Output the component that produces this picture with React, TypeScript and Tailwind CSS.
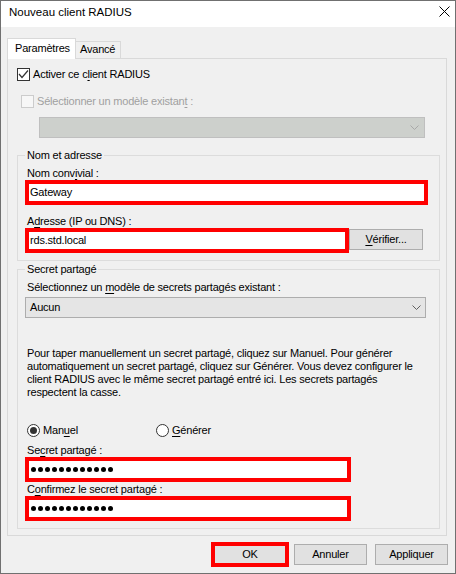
import React from 'react';

const U = ({ children }: { children: React.ReactNode }) => (
  <span className="underline underline-offset-[2px]">{children}</span>
);

const Chevron = ({ color }: { color: string }) => (
  <svg width="9" height="5" viewBox="0 0 9 5" fill="none">
    <path d="M0.5 0.5 L4.5 4.5 L8.5 0.5" stroke={color} strokeWidth="1" />
  </svg>
);

const RedBox = ({ className, children }: { className: string; children: React.ReactNode }) => (
  <div className={`h-[25px] border-[4px] border-[#ff0000] bg-white flex items-center pl-[1px] shrink-0 ${className}`}>
    {children}
  </div>
);

const Dots = () => (
  <div className="flex gap-[2px] pl-[1px]">
    {Array.from({ length: 12 }).map((_, i) => (
      <span key={i} className="w-[5px] h-[5px] rounded-full bg-black" />
    ))}
  </div>
);

const Button = ({ className, children }: { className?: string; children: React.ReactNode }) => (
  <button className={`w-[73px] h-[21px] bg-[#e1e1e1] border border-[#adadad] flex items-center justify-center ${className ?? ''}`}>
    {children}
  </button>
);

const Radio = ({ checked }: { checked?: boolean }) => (
  <span className="w-[13px] h-[13px] rounded-full border border-[#333333] bg-white flex items-center justify-center shrink-0">
    {checked && <span className="w-[7px] h-[7px] rounded-full bg-[#333333]" />}
  </span>
);

export default function App() {
  return (
    <div className="w-[456px] h-[574px] border border-[#707070] bg-[#f0f0f0] flex flex-col text-black font-['Liberation_Sans',Arial,sans-serif] text-[11px] tracking-[-0.2px] leading-[15px]">
      {/* Title bar */}
      <div className="h-[26px] bg-white flex items-start justify-between pl-[8px] pr-[5px] shrink-0">
        <span className="mt-[4px] text-[11.5px] tracking-normal">Nouveau client RADIUS</span>
        <svg className="mt-[5px]" width="11" height="11" viewBox="0 0 11 11">
          <path d="M0.5 0.5 L10.5 10.5 M10.5 0.5 L0.5 10.5" stroke="#000" strokeWidth="1" />
        </svg>
      </div>

      <div className="flex-1 flex flex-col pl-[6px] pr-[8px] pt-[11px]">
        {/* Tabs */}
        <div className="flex items-end h-[21px] relative z-10 -mb-px">
          <div className="w-[69px] h-[21px] border border-b-0 border-[#d9d9d9] bg-white pl-[7px] pt-[2px]">
            Paramètres
          </div>
          <div className="w-[45px] h-[18px] border border-l-0 border-[#d9d9d9] bg-[#f0f0f0] pl-[4px]">
            Avancé
          </div>
        </div>

        {/* Tab page */}
        <div className="h-[478px] border border-[#d9d9d9] bg-[#f0f0f0] flex flex-col">
          <div className="mt-[8px] ml-[9px] flex items-center h-[15px]">
            <span className="w-[13px] h-[13px] border border-[#333333] bg-white shrink-0">
              <svg width="11" height="11" viewBox="0 0 11 11" fill="none">
                <path d="M1 5 L4 8.5 L10 1.5" stroke="#333333" strokeWidth="1.2" />
              </svg>
            </span>
            <span className="ml-[3px]">Activer ce c<U>l</U>ient RADIUS</span>
          </div>

          <div className="mt-[12px] ml-[13px] flex items-center h-[15px] text-[#a0a0a0]">
            <span className="w-[13px] h-[13px] border border-[#cccccc] bg-[#f7f7f7] shrink-0" />
            <span className="ml-[3px]">Sélectionner un modèle existan<U>t</U> :</span>
          </div>

          <div className="mt-[8px] ml-[31px] w-[386px] h-[21px] bg-[#cdd0cc] border border-[#bfbfbf] flex items-center justify-end pr-[5px] shrink-0">
            <Chevron color="#a8a8a8" />
          </div>

          {/* Nom et adresse */}
          <fieldset className="mt-[10px] ml-[9px] w-[423px] border border-[#dcdcdc] px-[7px] pb-[7px]">
            <legend className="px-[2px] leading-[15px]">Nom et adresse</legend>
            <div className="mt-[3px] h-[14px] leading-[14px] pl-[2px]">Nom conv<U>i</U>vial :</div>
            <RedBox className="w-[403px]">Gateway</RedBox>
            <div className="mt-[9px] h-[14px] leading-[14px] pl-[2px]">A<U>d</U>resse (IP ou DNS) :</div>
            <div className="flex items-start">
              <RedBox className="w-[324px]">rds.std.local</RedBox>
              <Button className="mt-[1px] w-[74px]">
                <span><U>V</U>érifier...</span>
              </Button>
            </div>
          </fieldset>

          {/* Secret partagé */}
          <fieldset className="mt-[1px] ml-[9px] w-[423px] border border-[#dcdcdc] px-[7px] pb-[7px]">
            <legend className="px-[2px] leading-[15px]">Secret partagé</legend>
            <div className="mt-[3px] h-[14px] leading-[14px] pl-[2px]">
              Sélectionnez un <U>m</U>odèle de secrets partagés existant :
            </div>
            <div className="mt-[3px] w-[401px] h-[21px] bg-[#e5e5e5] border border-[#adadad] flex items-center justify-between pl-[4px] pr-[4px]">
              <span>Aucun</span>
              <Chevron color="#606060" />
            </div>
            <p className="mt-[29px] pl-[2px] leading-[13px] whitespace-nowrap">
              Pour taper manuellement un secret partagé, cliquez sur Manuel. Pour générer
              <br />
              automatiquement un secret partagé, cliquez sur Générer. Vous devez configurer le
              <br />
              client RADIUS avec le même secret partagé entré ici. Les secrets partagés
              <br />
              respectent la casse.
            </p>
            <div className="mt-[24px] flex items-center h-[15px] pl-[2px]">
              <div className="w-[129px] flex items-center">
                <Radio checked />
                <span className="ml-[3px]">Man<U>u</U>el</span>
              </div>
              <div className="flex items-center">
                <Radio />
                <span className="ml-[3px]"><U>G</U>énérer</span>
              </div>
            </div>
            <div className="mt-[5px] h-[14px] leading-[14px] pl-[2px]">Se<U>c</U>ret partagé :</div>
            <RedBox className="w-[326px]">
              <Dots />
            </RedBox>
            <div className="h-[14px] leading-[14px] pl-[2px]">C<U>o</U>nfirmez le secret partagé :</div>
            <RedBox className="w-[326px]">
              <Dots />
            </RedBox>
          </fieldset>
        </div>

        {/* Buttons */}
        <div className="mt-[6px] -mr-px flex items-center justify-end h-[25px]">
          <button className="w-[78px] h-[25px] border-[4px] border-[#ff0000] bg-[#e1e1e1] flex items-center justify-center">
            OK
          </button>
          <Button className="ml-[5px]">Annuler</Button>
          <Button className="ml-[8px]">Appliquer</Button>
        </div>
      </div>
    </div>
  );
}
